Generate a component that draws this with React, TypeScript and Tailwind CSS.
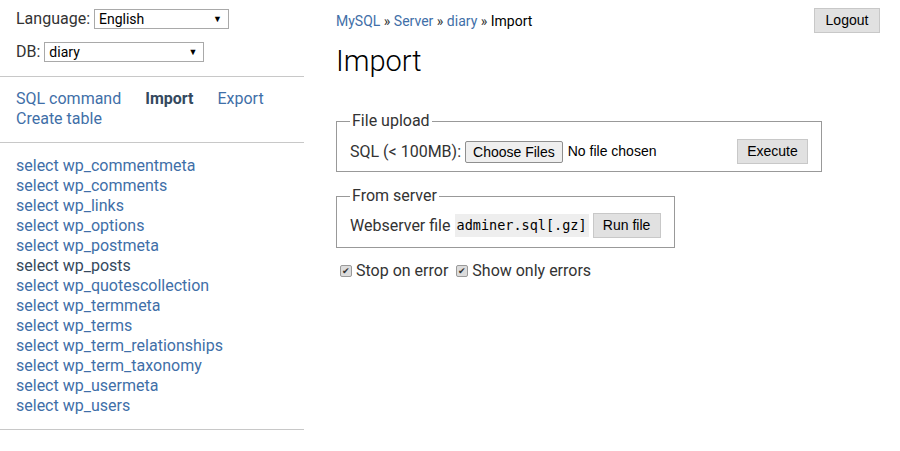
const tables = [
  "wp_commentmeta",
  "wp_comments",
  "wp_links",
  "wp_options",
  "wp_postmeta",
  "wp_posts",
  "wp_quotescollection",
  "wp_termmeta",
  "wp_terms",
  "wp_term_relationships",
  "wp_term_taxonomy",
  "wp_usermeta",
  "wp_users",
];

function Select({ value, width }: { value: string; width: string }) {
  return (
    <div
      className={`flex h-[20px] items-center justify-between border border-[#a9a9a9] bg-white pl-[4px] pr-[6px] text-[14px] text-black ${width}`}
    >
      <span>{value}</span>
      <span className="text-[9px]">▼</span>
    </div>
  );
}

function Btn({ children, cls = "" }: { children: React.ReactNode; cls?: string }) {
  return (
    <button
      className={`shrink-0 border border-[#c8c8c8] bg-[#e1e1e1] font-['Liberation_Sans',Arial,sans-serif] text-[14px] text-black ${cls}`}
    >
      {children}
    </button>
  );
}

function Check({ label }: { label: string }) {
  return (
    <label className="flex items-center gap-[4px]">
      <span className="flex h-[12px] w-[12px] items-center justify-center rounded-[2px] border border-[#9a9a9a] bg-[#dcdcdc] text-[9px] leading-none text-[#333]">
        ✔
      </span>
      <span>{label}</span>
    </label>
  );
}

export default function App() {
  return (
    <div className="flex min-h-[451px] bg-white font-['Roboto',sans-serif] text-[16px] text-[#333]">
      {/* Sidebar */}
      <div className="w-[304px] shrink-0">
        <div className="px-[16px] pt-[9px] pb-[14px] leading-[20px]">
          <div className="flex items-center gap-[4px]">
            <span>Language:</span>
            <Select value="English" width="w-[135px]" />
          </div>
          <div className="mt-[13px] flex items-center gap-[4px]">
            <span>DB:</span>
            <Select value="diary" width="w-[160px]" />
          </div>
        </div>
        <div className="border-t border-[#c8c8c8] px-[16px] pt-[12px] pb-[13px] leading-[20px]">
          <div className="flex gap-[24px]">
            <a className="text-[#3f6fa8]">SQL command</a>
            <a className="font-bold text-[#34495e]">Import</a>
            <a className="text-[#3f6fa8]">Export</a>
          </div>
          <a className="block text-[#3f6fa8]">Create table</a>
        </div>
        <div className="border-t border-[#c8c8c8] px-[16px] pt-[13px] pb-[13px] leading-[20px]">
          {tables.map((t) => (
            <a
              key={t}
              className={`block ${t === "wp_posts" ? "text-[#34495e]" : "text-[#3f6fa8]"}`}
            >
              select {t}
            </a>
          ))}
        </div>
        <div className="border-t border-[#c8c8c8]" />
      </div>

      {/* Main */}
      <div className="flex-1 pl-[32px] pr-[20px]">
        <div className="flex items-start justify-between pt-[8px]">
          <div className="pt-[3px] text-[14px]">
            <a className="text-[#3f6fa8]">MySQL</a> » <a className="text-[#3f6fa8]">Server</a> »{" "}
            <a className="text-[#3f6fa8]">diary</a> » <span className="text-black">Import</span>
          </div>
          <Btn cls="h-[25px] w-[66px]">Logout</Btn>
        </div>
        <h1 className="mt-[8px] text-[29px] font-light leading-[40px] text-black">Import</h1>

        <fieldset className="mt-[30px] w-[486px] border border-[#999] px-[13px] pt-[8px] pb-[7px]">
          <legend className="px-[2px] leading-[20px]">File upload</legend>
          <div className="flex items-center whitespace-nowrap">
            <span>SQL (&lt; 100MB):</span>
            <button className="ml-[4px] h-[22px] rounded-[2px] border border-[#8f8f8f] bg-[#efefef] px-[7px] font-['Liberation_Sans',Arial,sans-serif] text-[14px] text-black">
              Choose Files
            </button>
            <span className="ml-[5px] font-['Liberation_Sans',Arial,sans-serif] text-[14px] text-black">No file chosen</span>
            <Btn cls="ml-auto h-[25px] w-[71px]">Execute</Btn>
          </div>
        </fieldset>

        <fieldset className="mt-[14px] w-[337px] border border-[#999] px-[13px] pt-[7px] pb-[9px]">
          <legend className="px-[2px] leading-[20px]">From server</legend>
          <div className="flex items-center whitespace-nowrap">
            <span className="shrink-0">Webserver file</span>
            <code className="ml-[4px] shrink-0 bg-[#eee] px-[2px] py-[1px] font-['DejaVu_Sans_Mono',monospace] text-[13.5px] text-black">
              adminer.sql[.gz]
            </code>
            <Btn cls="ml-[4px] h-[25px] w-[68px]">Run file</Btn>
          </div>
        </fieldset>

        <div className="mt-[11px] flex items-center gap-[8px] pl-[4px]">
          <Check label="Stop on error" />
          <Check label="Show only errors" />
        </div>
      </div>
    </div>
  );
}
